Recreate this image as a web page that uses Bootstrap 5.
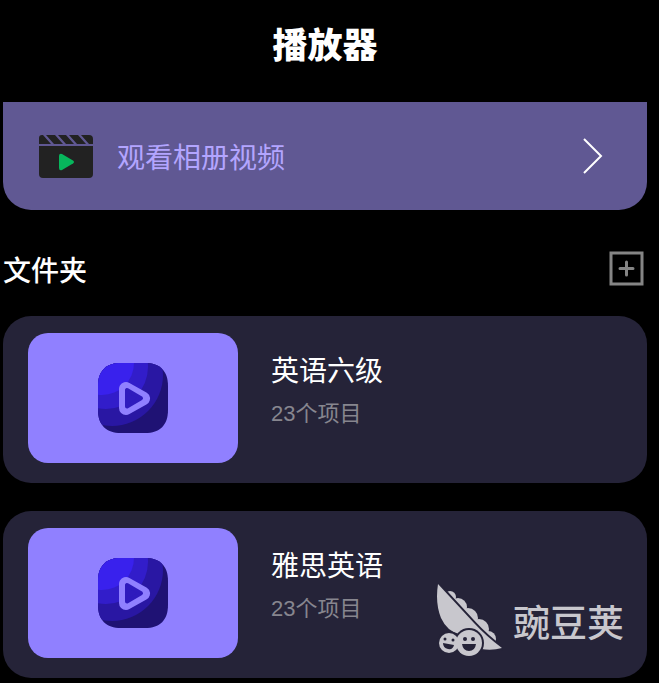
<!DOCTYPE html>
<html lang="zh-CN">
<head>
<meta charset="utf-8">
<meta name="viewport" content="width=device-width, initial-scale=1">
<title>播放器</title>
<link href="https://cdn.jsdelivr.net/npm/bootstrap@5.3.0/dist/css/bootstrap.min.css" rel="stylesheet">
<style>
body{background:#000;color:#fff;font-family:"Noto Sans CJK SC",sans-serif;overflow-x:hidden}
.page{padding:22px 12px 4px 3px}
.page-title{font-size:35px;line-height:42px;font-weight:900;margin-bottom:38px}
.album{background:#605893;color:#b3a5ff;height:108px;padding:0 44px 0 36px;border-radius:0 0 28px 28px;font-size:28px;gap:24px}
.album:hover{color:#b3a5ff}
.album-text{line-height:40px}
.section-head{height:106px;padding:11px 3px 0 0}
.section-title{font-size:28px;line-height:40px;font-weight:500}
.add-btn{line-height:0}
.folder{background:#252338;border-radius:28px;height:167px;padding:0 24px 4px 25px;gap:33px}
.folder:hover{color:#fff}
.folders{gap:28px}
.thumb{background:#9080ff;width:210px;height:130px;border-radius:20px}
.folder-name{font-size:28px;line-height:40px;font-weight:400}
.folder-count{font-family:"Liberation Sans","Noto Sans CJK SC",sans-serif;font-size:22px;line-height:30px;color:#87868f;margin-top:10px}
.folder-info{margin-top:-18px}
.watermark{right:23px;bottom:21px;color:#c8c7cd;gap:10px}
.watermark-text{font-size:37px;line-height:44px;font-weight:500}
</style>
</head>
<body>
<svg width="0" height="0" class="position-absolute" aria-hidden="true">
<symbol id="player" viewBox="0 0 70 70">
<clipPath id="tile"><path d="M23 0H47C62 0 70 8 70 23V47C70 62 62 70 47 70H23C8 70 0 62 0 47V23C0 8 8 0 23 0Z"/></clipPath>
<g clip-path="url(#tile)">
<path fill="#1f1274" d="M0 0H70V70H0Z"/>
<circle cx="14" cy="12" r="51" fill="#2917a3"/>
<circle cx="8" cy="4" r="42" fill="#321dca"/>
<circle cx="4" cy="0" r="32" fill="#3921ed"/>
</g>
<path d="M28 26V45L45 35.5Z" fill="#9080ff" stroke="#9080ff" stroke-width="14" stroke-linejoin="round"/>
<path d="M29 27V43.5L43 35.2Z" fill="#2f1bbd" stroke="#2f1bbd" stroke-width="4" stroke-linejoin="round"/>
</symbol>
</svg>
<main class="page">
<h1 class="page-title text-center">播放器</h1>
<a href="#" class="album d-flex align-items-center text-decoration-none">
<svg width="54" height="44" viewBox="0 0 54 44" aria-hidden="true">
<path fill="#222" d="M0 12H54V40Q54 44 50 44H4Q0 44 0 40ZM0 10V4Q0 1 3 1H4L12 10ZM7 1H16L24 10H15ZM19 1H27L35 10H27ZM30 1H39L47 10H38ZM42 1H50Q54 1 54 5V10H50Z"/>
<path fill="#07b65c" d="M20 22Q20 19 23 20L34 26.5Q36 28 34 29.500L23 36Q20 37 20 34Z"/>
</svg>
<span class="album-text flex-grow-1">观看相册视频</span>
<svg width="20" height="36" viewBox="0 0 20 36" fill="none" stroke="#fff" stroke-width="2" aria-hidden="true"><path d="M1 1L18 18L1 35"/></svg>
</a>
<div class="section-head d-flex align-items-center justify-content-between">
<h2 class="section-title mb-0">文件夹</h2>
<button type="button" class="add-btn btn p-0 border-0" aria-label="新建文件夹">
<svg width="35" height="35" viewBox="0 0 35 35" fill="none" stroke="#858585"><path stroke-width="3" d="M2 2H33V33H2Z"/><path stroke-width="3" stroke-linecap="round" d="M17.500 11V24M11 17.500H24"/></svg>
</button>
</div>
<div class="folders d-flex flex-column">
<a href="#" class="folder d-flex align-items-center text-white text-decoration-none">
<div class="thumb d-flex align-items-center justify-content-center flex-shrink-0"><svg width="70" height="70" aria-hidden="true"><use href="#player"/></svg></div>
<div class="folder-info"><h3 class="folder-name mb-0">英语六级</h3><div class="folder-count">23个项目</div></div>
</a>
<a href="#" class="folder d-flex align-items-center text-white text-decoration-none position-relative">
<div class="thumb d-flex align-items-center justify-content-center flex-shrink-0"><svg width="70" height="70" aria-hidden="true"><use href="#player"/></svg></div>
<div class="folder-info"><h3 class="folder-name mb-0">雅思英语</h3><div class="folder-count">23个项目</div></div>
<div class="watermark position-absolute d-flex align-items-center">
<svg width="66" height="73" viewBox="0 0 66 73" aria-hidden="true">
<g fill="currentColor"><circle cx="13" cy="13" r="6"/><circle cx="21" cy="23" r="9"/><circle cx="31" cy="34" r="10"/><circle cx="42" cy="45" r="10"/><circle cx="51" cy="55" r="8"/></g>
<path d="M1 0L37 39Q50 53 65 64Q55 67 44 65L22 50Q10 47 4 34Q-2 19 1 0Z" fill="currentColor" stroke="#252338" stroke-width="4" paint-order="stroke"/>
<g fill="#252338"><circle cx="12" cy="59" r="12"/><circle cx="32" cy="59" r="15"/></g>
<g fill="currentColor"><circle cx="12" cy="59" r="10"/><circle cx="32" cy="59" r="13"/></g>
<g fill="#252338"><circle cx="8" cy="55" r="1.500"/><circle cx="16" cy="56" r="1.500"/><circle cx="28" cy="55" r="2"/><circle cx="36" cy="55" r="2"/><path d="M6 59L17 61Q16 66 11 65Q6 64 6 59ZM25 60H39Q38 67 32 67Q26 67 25 60Z"/></g>
</svg>
<span class="watermark-text">豌豆荚</span>
</div>
</a>
</div>
</main>
<script src="https://cdn.jsdelivr.net/npm/bootstrap@5.3.0/dist/js/bootstrap.bundle.min.js"></script>
</body>
</html>
